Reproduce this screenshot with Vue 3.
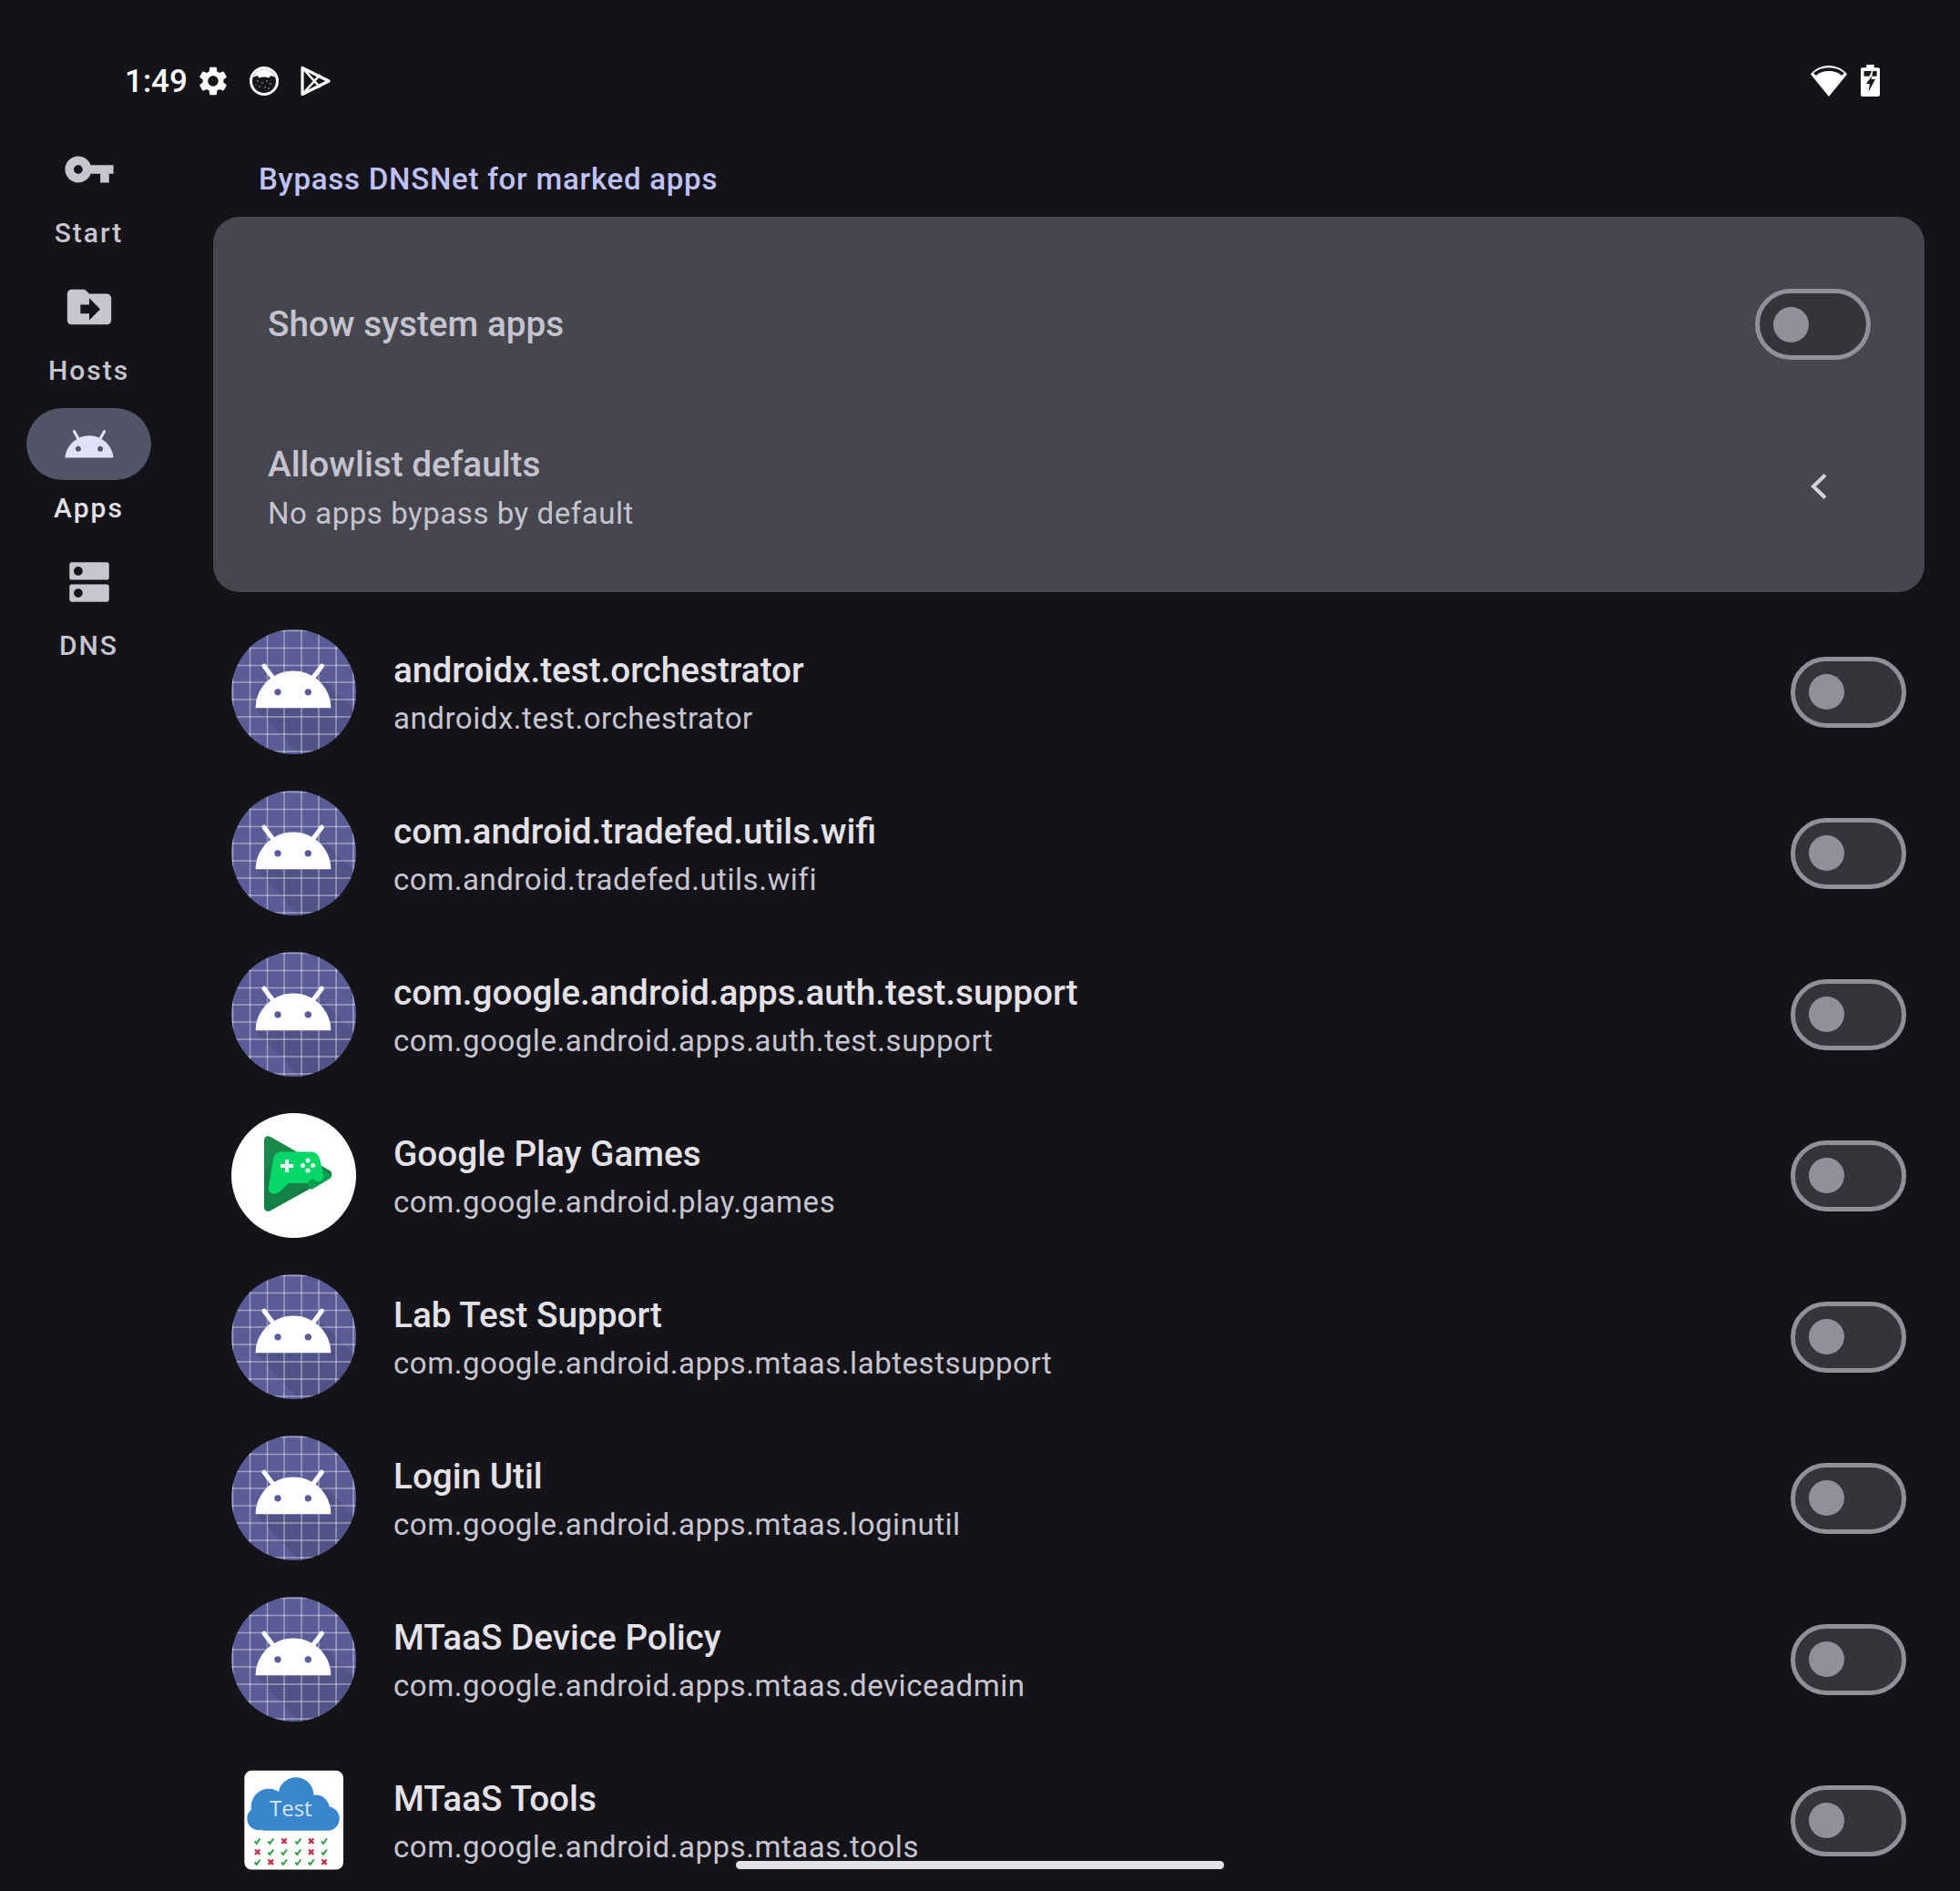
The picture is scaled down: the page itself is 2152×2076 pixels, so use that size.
<script setup>
const navItems = [
  { label: 'Start', path: 'M12.65 10C11.83 7.67 9.61 6 7 6c-3.31 0-6 2.69-6 6s2.69 6 6 6c2.61 0 4.83-1.67 5.65-4H17v4h4v-4h2v-4H12.65zM7 14c-1.1 0-2-.9-2-2s.9-2 2-2 2 .9 2 2-.9 2-2 2z' },
  { label: 'Hosts', path: 'M20 6h-8l-2-2H4c-1.1 0-1.99.9-1.99 2L2 18c0 1.1.9 2 2 2h16c1.1 0 2-.9 2-2V8c0-1.1-.9-2-2-2zm-8 12v-3H8v-4h4V8l5 5-5 5z' },
  { label: 'Apps', active: true, path: 'M17.6 9.48l1.84-3.18c.16-.31.04-.69-.26-.85-.29-.15-.65-.06-.83.22l-1.88 3.24c-2.86-1.21-6.08-1.21-8.94 0L5.65 5.67c-.19-.29-.58-.38-.87-.2-.28.18-.37.54-.22.83L6.4 9.48C3.3 11.25 1.28 14.44 1 18h22c-.28-3.56-2.3-6.75-5.4-8.52zM7 15.25c-.69 0-1.25-.56-1.25-1.25s.56-1.25 1.25-1.25 1.25.56 1.25 1.25-.56 1.25-1.25 1.25zm10 0c-.69 0-1.25-.56-1.25-1.25s.56-1.25 1.25-1.25 1.25.56 1.25 1.25-.56 1.25-1.25 1.25z' },
  { label: 'DNS', path: 'M20 13H4c-.55 0-1 .45-1 1v6c0 .55.45 1 1 1h16c.55 0 1-.45 1-1v-6c0-.55-.45-1-1-1zM7 19c-1.1 0-2-.9-2-2s.9-2 2-2 2 .9 2 2-.9 2-2 2zM20 3H4c-.55 0-1 .45-1 1v6c0 .55.45 1 1 1h16c.55 0 1-.45 1-1V4c0-.55-.45-1-1-1zM7 9c-1.1 0-2-.9-2-2s.9-2 2-2 2 .9 2 2-.9 2-2 2z' }
]

const gearPath = 'M19.14 12.94c.04-.3.06-.61.06-.94 0-.32-.02-.64-.07-.94l2.03-1.58c.18-.14.23-.41.12-.61l-1.92-3.32c-.12-.22-.37-.29-.59-.22l-2.39.96c-.5-.38-1.03-.7-1.62-.94l-.36-2.54c-.04-.24-.24-.41-.48-.41h-3.84c-.24 0-.43.17-.47.41l-.36 2.54c-.59.24-1.13.57-1.62.94l-2.39-.96c-.22-.08-.47 0-.59.22L2.74 8.87c-.12.21-.08.47.12.61l2.03 1.58c-.05.3-.09.63-.09.94s.02.64.07.94l-2.03 1.58c-.18.14-.23.41-.12.61l1.92 3.32c.12.22.37.29.59.22l2.39-.96c.5.38 1.03.7 1.62.94l.36 2.54c.05.24.24.41.48.41h3.84c.24 0 .44-.17.47-.41l.36-2.54c.59-.24 1.13-.56 1.62-.94l2.39.96c.22.08.47 0 .59-.22l1.92-3.32c.12-.22.07-.47-.12-.61l-2.01-1.58zM12 15.6c-1.98 0-3.6-1.62-3.6-3.6s1.62-3.6 3.6-3.6 3.6 1.62 3.6 3.6-1.62 3.6-3.6 3.6z'

const apps = [
  { name: 'androidx.test.orchestrator', pkg: 'androidx.test.orchestrator', icon: 'android' },
  { name: 'com.android.tradefed.utils.wifi', pkg: 'com.android.tradefed.utils.wifi', icon: 'android' },
  { name: 'com.google.android.apps.auth.test.support', pkg: 'com.google.android.apps.auth.test.support', icon: 'android' },
  { name: 'Google Play Games', pkg: 'com.google.android.play.games', icon: 'games' },
  { name: 'Lab Test Support', pkg: 'com.google.android.apps.mtaas.labtestsupport', icon: 'android' },
  { name: 'Login Util', pkg: 'com.google.android.apps.mtaas.loginutil', icon: 'android' },
  { name: 'MTaaS Device Policy', pkg: 'com.google.android.apps.mtaas.deviceadmin', icon: 'android' },
  { name: 'MTaaS Tools', pkg: 'com.google.android.apps.mtaas.tools', icon: 'test' }
]

// lines of the adaptive icon grid
const gridLines = [1.5, 20.5, 39.5, 58, 77, 96, 115, 134]

// results under the cloud of the Test icon
const marks = []
const markRows = [['y', 'y', 'n', 'y', 'n', 'y'], ['n', 'y', 'y', 'y', 'n', 'y'], ['y', 'n', 'y', 'y', 'y', 'n']]
const markX = [128, 172, 216, 262, 305, 348]
const markY = [302, 338, 371]
markRows.forEach((row, r) => {
  row.forEach((m, c) => {
    marks.push({ id: `${r}-${c}`, x: markX[c], y: markY[r], ok: m === 'y' })
  })
})
</script>

<template>
  <div class="screen">
    <div class="status-bar">
      <div class="status-left">
        <span class="clock">1:49</span>
        <svg class="st-gear" viewBox="0 0 24 24"><path :d="gearPath" fill="#fff" /></svg>
        <svg class="st-cat" viewBox="0 0 32 32">
          <circle cx="16" cy="16" r="16" fill="#fff" />
          <circle cx="16" cy="16" r="13" fill="#15161b" />
          <path d="M3.6 12C6 6 11 3 16 3s10 3 12.4 9c-1.6-1-3.6-1.6-5.4-1.8l-1.4 2.3c-3.6-1.4-7.6-1.4-11.2 0L9 10.200C7.200 10.400 5.200 11 3.600 12z" fill="#fff" />
          <g fill="#d8d8d8">
            <circle cx="9" cy="16" r=".7" /><circle cx="14" cy="18" r=".7" /><circle cx="19" cy="16" r=".7" />
            <circle cx="23" cy="19" r=".7" /><circle cx="11" cy="22" r=".7" /><circle cx="17" cy="23" r=".7" />
            <circle cx="21" cy="24" r=".7" /><circle cx="7" cy="20" r=".6" />
          </g>
        </svg>
        <svg class="st-play" viewBox="0 0 33 34">
          <path d="M2 2.500V31.500L31 17z" fill="none" stroke="#fff" stroke-width="3.200" stroke-linejoin="round" />
          <path d="M2.500 3L21.500 24M2.500 31L21.500 10" fill="none" stroke="#fff" stroke-width="2.600" />
        </svg>
      </div>
      <div class="status-right">
        <svg class="st-wifi" viewBox="0 0 40 34">
          <path d="M0 9.500C5 3.500 12 0 20 0s15 3.500 20 9.500L20 34z" fill="#fff" />
          <path d="M4.500 9.700C8.500 6 14 4.200 20 4.200s11.500 1.800 15.500 5.500" fill="none" stroke="#15161b" stroke-width="3.800" />
        </svg>
        <svg class="st-battery" viewBox="0 0 21 35">
          <path d="M6.300 0h8.400v3.300H19c1.100 0 2 .9 2 2V33c0 1.100-.9 2-2 2H2c-1.100 0-2-.9-2-2V5.300c0-1.100.9-2 2-2h4.300z" fill="#fff" />
          <path d="M3.600 7h14v5.700H3.600z" fill="#15161b" />
          <path d="M12 7l-6 14h4l-1.500 9L16 15.500h-4.500L13.500 7z" fill="#fff" />
          <path d="M12 12.500L6 21h4l-1.500 8.800L16 16h-4.300z" fill="#15161b" />
        </svg>
      </div>
    </div>

    <div class="body-row">
      <nav class="rail">
        <div v-for="item in navItems" :key="item.label" class="rail-item" :class="{ active: item.active }">
          <div class="rail-pill">
            <svg class="rail-icon" viewBox="0 0 24 24"><path :d="item.path" /></svg>
          </div>
          <span class="rail-label">{{ item.label }}</span>
        </div>
      </nav>

      <main class="content">
        <p class="section-title">Bypass DNSNet for marked apps</p>

        <section class="options-card">
          <div class="option-row first">
            <span class="option-title">Show system apps</span>
            <div class="switch"><span class="knob"></span></div>
          </div>
          <div class="option-row second">
            <div class="option-text">
              <span class="option-title">Allowlist defaults</span>
              <span class="option-sub">No apps bypass by default</span>
            </div>
            <svg class="chevron" viewBox="0 0 58 58">
              <path d="M37 16.500L24 29l13 12.500" fill="none" stroke="#d3d2de" stroke-width="4" />
            </svg>
          </div>
        </section>

        <ul class="app-list">
          <li v-for="app in apps" :key="app.pkg" class="app-row">
            <svg class="app-icon" :class="{ round: app.icon !== 'test' }" viewBox="0 0 137 137">
              <template v-if="app.icon === 'android'">
                <rect width="137" height="137" fill="#595c96" />
                <g transform="translate(-14 -10.500) scale(.3333)">
                  <path d="M122 290L262 440H450V300L345 195z" fill="#000" opacity=".09" />
                </g>
                <g stroke="#fff" stroke-opacity=".42" stroke-width="1.500">
                  <path v-for="l in gridLines" :key="'v' + l" :d="`M${l} 0V137`" />
                  <path v-for="l in gridLines" :key="'h' + l" :d="`M0 ${l}H137`" />
                </g>
                <g transform="translate(-14 -10.500) scale(.3333)">
                  <path d="M122 290C122 224 177 168 246 168S370 224 370 290z" fill="#fff" />
                  <path d="M150 152L180 192M340 152L310 192" stroke="#fff" stroke-width="15" stroke-linecap="round" />
                  <circle cx="195" cy="238" r="11" fill="#595c96" />
                  <circle cx="295" cy="238" r="11" fill="#595c96" />
                </g>
              </template>
              <template v-else-if="app.icon === 'games'">
                <rect width="137" height="137" fill="#fff" />
                <path d="M36 30V103c0 4 3.500 6 7 4L108 71c3-2 3-6 0-8L43 26c-3.500-2-7 0-7 4z" fill="#1a8a4c" />
                <path d="M36 30V103c0 4 3.500 6 7 4L108 71c3-2 3-6 0-8L36 60z" fill="#127a42" opacity=".6" />
                <path d="M64 77H83L88 84 108 72c2-1.500 2-3 1-4L98 60z" fill="#0a9e4f" />
                <path d="M54 42.500H88c5 0 8 3.500 9.500 9L101 68c.5 4-1.500 7-5 7-3 0-5-1.500-7-3.500L83 77H63L54 85.500c-2 2-4 3-6.500 3-5 0-7.500-3.500-6.500-8L46 51c1-5 4-8.500 8-8.500z" fill="#05d868" />
                <path d="M59 51h4v5h5v4h-5v5h-4v-5h-5v-4h5z" fill="#fff" />
                <g fill="#fff">
                  <circle cx="84" cy="52" r="2.500" /><circle cx="84" cy="63" r="2.500" />
                  <circle cx="78.500" cy="57.500" r="2.500" /><circle cx="89.500" cy="57.500" r="2.500" />
                </g>
              </template>
              <template v-else>
                <g transform="translate(-14 -9.500) scale(.3333)">
                  <rect x="85" y="70" width="326" height="326" rx="24" fill="#fff" />
                  <g fill="#3a86cc">
                    <circle cx="255" cy="150" r="58" /><circle cx="165" cy="188" r="58" />
                    <circle cx="320" cy="195" r="45" /><circle cx="358" cy="228" r="40" />
                    <circle cx="132" cy="228" r="38" /><rect x="130" y="180" width="230" height="88" rx="20" />
                  </g>
                  <text x="238" y="222" class="cloud-text" text-anchor="middle">Test</text>
                  <g v-for="m in marks" :key="m.id" :transform="`translate(${m.x} ${m.y})`">
                    <path v-if="m.ok" d="M-9 1L-3 8 9-8" fill="none" stroke="#2f9e44" stroke-width="6" />
                    <path v-else d="M-8-8L8 8M8-8L-8 8" fill="none" stroke="#c0324a" stroke-width="7" />
                  </g>
                </g>
              </template>
            </svg>
            <div class="app-text">
              <span class="app-name">{{ app.name }}</span>
              <span class="app-pkg">{{ app.pkg }}</span>
            </div>
            <div class="switch"><span class="knob"></span></div>
          </li>
        </ul>
      </main>
    </div>

    <div class="home-indicator"></div>
  </div>
</template>

<style scoped>
.screen {
  position: relative;
  width: 2152px;
  height: 2076px;
  overflow: hidden;
  background: #131318;
  font-family: Roboto, "Noto Sans", sans-serif;
}

.status-bar {
  display: flex;
  justify-content: space-between;
  height: 146px;
  padding: 71px 88px 0 137px;
  box-sizing: border-box;
}

.status-left {
  display: flex;
  align-items: center;
  height: 36px;
}

.clock {
  font-size: 35px;
  line-height: 36px;
  font-weight: 500;
  color: #fff;
  width: 68px;
  padding-top: 2px;
}

.st-gear {
  width: 38px;
  height: 38px;
  margin-left: 10px;
}

.st-cat {
  width: 32px;
  height: 32px;
  margin-left: 21px;
}

.st-play {
  width: 33px;
  height: 34px;
  margin-left: 24px;
}

.status-right {
  display: flex;
  align-items: flex-start;
}

.st-wifi {
  width: 40px;
  height: 34px;
  margin-top: 1px;
}

.st-battery {
  width: 21px;
  height: 35px;
  margin-left: 15px;
}

.body-row {
  display: flex;
}

.rail {
  width: 195px;
  flex-shrink: 0;
  display: flex;
  flex-direction: column;
  align-items: center;
}

.rail-item {
  height: 151px;
  display: flex;
  flex-direction: column;
  align-items: center;
}

.rail-pill {
  width: 137px;
  height: 79px;
  border-radius: 40px;
  display: flex;
  align-items: center;
  justify-content: center;
}

.rail-icon {
  width: 58px;
  height: 58px;
  fill: #c7c5d0;
}

.rail-label {
  margin-top: 11px;
  font-size: 30px;
  line-height: 39px;
  font-weight: 500;
  letter-spacing: 2px;
  color: #c7c5d0;
}

.rail-item.active .rail-pill {
  background: #525468;
}

.rail-item.active .rail-icon {
  fill: #e1e0f9;
}

.rail-item.active .rail-label {
  color: #e4e1e9;
}

.content {
  flex: 1;
  padding: 26px 39px 0;
  min-width: 0;
}

.section-title {
  margin: 0 0 17px 50px;
  font-size: 33px;
  line-height: 49px;
  font-weight: 500;
  letter-spacing: .75px;
  color: #c0c1ff;
}

.options-card {
  height: 412px;
  box-sizing: border-box;
  padding: 39px 59px 39px 60px;
  background: #46464f;
  border-radius: 29px;
  display: flex;
  flex-direction: column;
  gap: 22px;
}

.option-row {
  display: flex;
  align-items: center;
  justify-content: space-between;
}

.option-row.first {
  height: 158px;
}

.option-row.second {
  height: 154px;
}

.option-text {
  display: flex;
  flex-direction: column;
}

.option-title {
  font-size: 38.7px;
  line-height: 58px;
  font-weight: 500;
  color: #c4c3ce;
}

.option-sub {
  font-size: 33px;
  line-height: 49px;
  letter-spacing: .55px;
  color: #c4c3ce;
}

.chevron {
  width: 58px;
  height: 58px;
  margin-right: 29px;
}

.switch {
  width: 127px;
  height: 78px;
  flex-shrink: 0;
  box-sizing: border-box;
  border: 5px solid #908f9a;
  border-radius: 39px;
  background: #35343b;
  display: flex;
  align-items: center;
  padding-left: 15px;
}

.knob {
  width: 39px;
  height: 39px;
  border-radius: 50%;
  background: #908f9a;
}

.app-list {
  list-style: none;
  margin: 21px 0 0;
  padding: 0 20px;
}

.app-row {
  height: 177px;
  display: flex;
  align-items: center;
}

.app-icon {
  width: 137px;
  height: 137px;
  flex-shrink: 0;
  margin-right: 41px;
}

.app-icon.round {
  clip-path: circle(50%);
}

.cloud-text {
  font-family: "Open Sans", sans-serif;
  font-size: 72px;
  fill: #d8e8f6;
}

.app-text {
  flex: 1;
  min-width: 0;
  display: flex;
  flex-direction: column;
}

.app-name {
  font-size: 38.7px;
  line-height: 60px;
  margin-bottom: -2px;
  font-weight: 500;
  color: #e4e1e9;
}

.app-pkg {
  font-size: 33px;
  line-height: 49px;
  letter-spacing: .55px;
  color: #c7c5d0;
}

.home-indicator {
  position: absolute;
  left: 808px;
  top: 2043px;
  width: 536px;
  height: 9px;
  border-radius: 5px;
  background: #e4e1e9;
}
</style>

<style>
html, body {
  margin: 0;
  background: #131318;
}
</style>
